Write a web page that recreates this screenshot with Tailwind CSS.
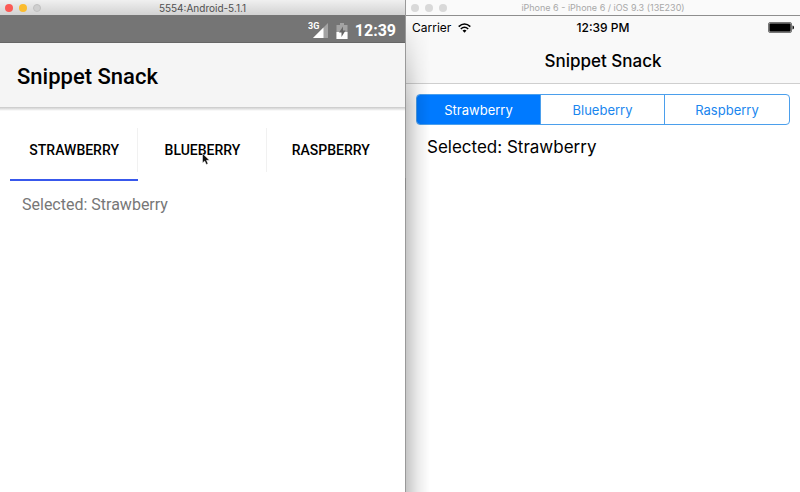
<!DOCTYPE html>
<html lang="en">
<head>
<meta charset="utf-8">
<meta name="viewport" content="width=device-width, initial-scale=1">
<title>Snippet Snack</title>
<script src="https://cdn.jsdelivr.net/npm/@tailwindcss/browser@4"></script>
</head>
<body class="bg-white">
<main class="grid min-h-screen grid-cols-[405fr_395fr] overflow-hidden">
  <!-- Android emulator window -->
  <section class="flex flex-col bg-white font-['Roboto',sans-serif]" aria-label="Android emulator">
    <header class="relative flex h-[15px] items-center justify-center bg-linear-to-b from-[#f0f0f0] to-[#d2d2d2]">
      <div class="absolute left-[5px] flex gap-[6px]">
        <span class="size-2 rounded-full bg-[#fb5a55]"></span>
        <span class="size-2 rounded-full bg-[#fbbc2e]"></span>
        <span class="size-2 rounded-full border border-[#c0c0c0] bg-[#cfcfcf]"></span>
      </div>
      <span class="font-['Inter',sans-serif] text-[10px] leading-3 text-[#505050]">5554:Android-5.1.1</span>
    </header>
    <div class="flex h-7 items-center justify-end border-b border-[#666] bg-[#757575] pt-1 pr-[9px] text-white">
      <svg class="mr-2 h-5 w-5" viewBox="0 0 20 20" aria-label="3G signal">
        <path d="M20 2V17H5Z" fill="#a3a3a3"/>
        <path d="M15.500 6.500V17H5Z" fill="#fff"/>
        <text x="0" y="8" font-size="9" font-weight="700" fill="#fff" font-family="Roboto">3G</text>
      </svg>
      <svg class="mr-[7px] h-4 w-3" viewBox="0 0 12 16" aria-label="Battery charging">
        <path d="M4 0H8V2H11.500V16H.5V2H4Z" fill="#a3a3a3"/>
        <path d="M.5 9H11.500V16H.5Z" fill="#fff"/>
        <path d="M7 3.500L3 9.500H5.500V14L9.500 7.500H7Z" fill="#666"/>
      </svg>
      <time class="text-[16px] leading-5 font-bold">12:39</time>
    </div>
    <div class="flex h-16 items-center bg-[#f5f5f5] px-[17px] pt-1">
      <h1 class="text-[22px] leading-7 font-medium text-black">Snippet Snack</h1>
    </div>
    <div class="h-1 bg-linear-to-b from-[#c8c8c8] to-white"></div>
    <div class="mx-[10px] mt-2 grid h-[62px] grid-cols-3 text-[14px] leading-5 font-medium text-black" role="tablist">
      <button type="button" role="tab" aria-selected="true" class="relative flex items-center justify-center border-b-2 border-[#3858ec] pt-[2px]">STRAWBERRY<span class="absolute right-0 top-[9px] h-11 w-px bg-[#f1f1f1]"></span></button>
      <button type="button" role="tab" aria-selected="false" class="relative flex items-center justify-center border-b-2 border-transparent pt-[2px]">BLUEBERRY<span class="absolute right-0 top-[9px] h-11 w-px bg-[#f1f1f1]"></span>
        <svg class="absolute left-16 top-[34px] h-3 w-2" viewBox="0 0 8 12" aria-hidden="true"><path d="M.5 .5V10L2.700 8L4.300 11.500L6 10.700L4.500 7.300H7.500Z" fill="#111" stroke="#fff" stroke-width=".5"/></svg>
      </button>
      <button type="button" role="tab" aria-selected="false" class="flex items-center justify-center border-b-2 border-transparent pt-[2px]">RASPBERRY</button>
    </div>
    <p class="mt-[14px] px-[22px] text-[16px] leading-5 text-[#777]">Selected: Strawberry</p>
  </section>

  <!-- iOS simulator window -->
  <section class="relative flex flex-col border-l border-[#999] bg-white font-['Inter',sans-serif]" aria-label="iOS simulator">
    <header class="relative flex h-4 items-center justify-center border-b border-[#8e8e8e] bg-[#fafafa]">
      <div class="absolute left-[5px] flex gap-[6px]">
        <span class="size-2 rounded-full bg-[#d9d9d9]"></span>
        <span class="size-2 rounded-full bg-[#d9d9d9]"></span>
        <span class="size-2 rounded-full bg-[#d9d9d9]"></span>
      </div>
      <span class="text-[9px] leading-3 text-[#a8a8a8]">iPhone 6 - iPhone 6 / iOS 9.3 (13E230)</span>
    </header>
    <div class="border-b border-[#cfcfcf] bg-[#f9f9f9]">
      <div class="grid h-[23px] grid-cols-3 items-center px-[6px] text-[12px] leading-4 text-black">
        <div class="flex items-center gap-[7px]">
          <span>Carrier</span>
          <svg class="h-[10px] w-[13px]" viewBox="0 0 13 10" fill="none" stroke="#000" stroke-width="1.600" aria-label="Wi-Fi">
            <path d="M.7 3.700Q6.500-1.700 12.300 3.700M2.800 6Q6.500 2.500 10.200 6"/>
            <path d="M4.500 7.500Q6.500 5.900 8.500 7.500L6.500 9.700Z" fill="#000" stroke="none"/>
          </svg>
        </div>
        <time class="text-center font-medium">12:39 PM</time>
        <svg class="h-[11px] w-[26px] justify-self-end" viewBox="0 0 26 11" aria-label="Battery full">
          <rect x=".5" y=".5" width="23" height="10" rx="1.500" fill="#aaa" stroke="#777"/>
          <rect x="1.500" y="1.500" width="21" height="8" rx="1" fill="#000"/>
          <path d="M24.500 3.500Q26 3.500 26 5.500T24.500 7.500Z" fill="#000"/>
        </svg>
      </div>
      <h1 class="h-11 text-center text-[17px] leading-11 font-medium text-black">Snippet Snack</h1>
    </div>
    <div class="mx-[10px] mt-[10px] grid h-[31px] grid-cols-3 divide-x divide-[#4b9fec] overflow-hidden rounded border border-[#4b9fec] text-[13px] leading-5 text-[#1a86ee]" role="group" aria-label="Flavor">
      <button type="button" aria-pressed="true" class="bg-[#007aff] text-white">Strawberry</button>
      <button type="button" aria-pressed="false">Blueberry</button>
      <button type="button" aria-pressed="false">Raspberry</button>
    </div>
    <p class="mt-[10px] px-[21px] text-[17px] leading-6 text-black">Selected: Strawberry</p>
    <div class="pointer-events-none absolute bottom-0 left-0 top-4 w-6 bg-linear-to-r from-black/22 via-black/8 to-transparent mask-t-from-[calc(100%-90px)]"></div>
    <div class="absolute -left-px top-[178px] h-3 w-px bg-[#888]"></div>
  </section>
</main>
</body>
</html>
